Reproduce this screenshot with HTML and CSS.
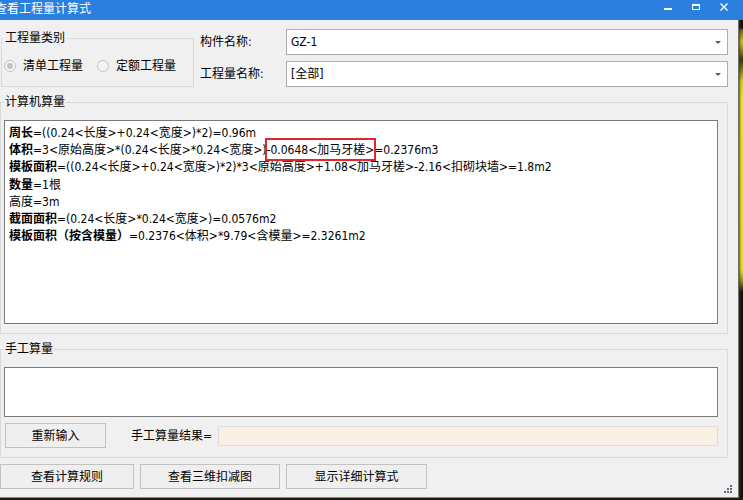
FILE: index.html
```html
<!DOCTYPE html>
<html lang="zh-CN">
<head>
<meta charset="utf-8">
<title>查看工程量计算式</title>
<link rel="stylesheet" href="styles.css">
</head>
<body>
<div class="screen">
  <div class="titlebar">
    <span class="title">查看工程量计算式</span>
    <div class="controls">
      <span class="ctl"><svg width="28" height="20" viewBox="0 0 28 20"><rect x="10" y="8" width="8" height="2" fill="#fff"/></svg></span>
      <span class="ctl"><svg width="28" height="20" viewBox="0 0 28 20"><rect x="10.5" y="4.5" width="7" height="5" fill="none" stroke="#fff" stroke-width="1"/><rect x="10" y="4" width="8" height="2" fill="#fff"/></svg></span>
      <span class="ctl"><svg width="28" height="20" viewBox="0 0 28 20"><path d="M10.5 3.5 L17.5 10.5 M17.5 3.5 L10.5 10.5" stroke="#fff" stroke-width="1.4" fill="none"/></svg></span>
    </div>
  </div>
  <div class="main">
    <div class="window">
      <div class="toprow">
        <fieldset class="group g-type">
          <legend class="legend">工程量类别</legend>
          <div class="radios">
            <span class="radio"><span class="dot checked"></span><span class="rtext">清单工程量</span></span>
            <span class="radio"><span class="dot"></span><span class="rtext">定额工程量</span></span>
          </div>
        </fieldset>
        <div class="form">
          <div class="frow">
            <span class="flabel">构件名称:</span>
            <div class="combo"><span class="cval">GZ-1</span><i class="arrow"></i></div>
          </div>
          <div class="frow">
            <span class="flabel">工程量名称:</span>
            <div class="combo"><span class="cval">[全部]</span><i class="arrow"></i></div>
          </div>
        </div>
      </div>

      <fieldset class="group g-auto">
        <legend class="legend">计算机算量</legend>
        <div class="output">
          <div class="line"><b>周长</b>=((0.24&lt;长度&gt;+0.24&lt;宽度&gt;)*2)=0.96m</div>
          <div class="line"><b>体积</b>=3&lt;原始高度&gt;*(0.24&lt;长度&gt;*0.24&lt;宽度&gt;)<span class="hl">-0.0648&lt;加马牙槎&gt;</span>=0.2376m3</div>
          <div class="line"><b>模板面积</b>=((0.24&lt;长度&gt;+0.24&lt;宽度&gt;)*2)*3&lt;原始高度&gt;+1.08&lt;加马牙槎&gt;-2.16&lt;扣砌块墙&gt;=1.8m2</div>
          <div class="line"><b>数量</b>=1根</div>
          <div class="line">高度=3m</div>
          <div class="line"><b>截面面积</b>=(0.24&lt;长度&gt;*0.24&lt;宽度&gt;)=0.0576m2</div>
          <div class="line"><b>模板面积（按含模量）</b>=0.2376&lt;体积&gt;*9.79&lt;含模量&gt;=2.3261m2</div>
        </div>
      </fieldset>

      <fieldset class="group g-manual">
        <legend class="legend">手工算量</legend>
        <div class="manual-input"></div>
        <div class="mrow">
          <button class="btn btn-reset" type="button">重新输入</button>
          <span class="mlabel">手工算量结果=</span>
          <div class="result"></div>
        </div>
      </fieldset>

      <div class="actions">
        <button class="btn act-1" type="button">查看计算规则</button>
        <button class="btn act-2" type="button">查看三维扣减图</button>
        <button class="btn act-3" type="button">显示详细计算式</button>
      </div>

      <svg class="grip" width="10" height="10" viewBox="0 0 10 10">
        <rect x="6" y="0" width="2" height="2" fill="#5a6a80"/>
        <rect x="3" y="3" width="2" height="2" fill="#5a6a80"/>
        <rect x="6" y="3" width="2" height="2" fill="#5a6a80"/>
        <rect x="0" y="6" width="2" height="2" fill="#5a6a80"/>
        <rect x="3" y="6" width="2" height="2" fill="#5a6a80"/>
        <rect x="6" y="6" width="2" height="2" fill="#5a6a80"/>
      </svg>
    </div>
    <div class="strip"></div>
  </div>
  <div class="bottomedge"></div>
</div>
</body>
</html>
```

FILE: styles.css
```css
html, body {
  margin: 0;
  padding: 0;
}
body {
  background: #000;
  width: 743px;
  height: 500px;
  overflow: hidden;
  font-family: "DejaVu Sans Condensed", "Noto Sans CJK SC", sans-serif;
  font-stretch: condensed;
  font-size: 12px;
  color: #000;
}
.screen {
  width: 743px;
  height: 500px;
  display: flex;
  flex-direction: column;
}
.titlebar {
  height: 20px;
  flex: none;
  background: #2b7fdf;
  display: flex;
  align-items: center;
  color: #fff;
}
.title {
  margin-left: -5px;
  font-size: 12px;
  line-height: 16px;
  padding-bottom: 3px;
}
.controls {
  margin-left: auto;
  margin-right: 5px;
  display: flex;
}
.ctl {
  width: 28px;
  height: 20px;
  display: block;
}
.ctl svg { display: block; }

.main {
  display: flex;
  height: 478px;
  flex: none;
}
.window {
  width: 738px;
  height: 477px;
  background: #f0f0f0;
  border-right: 1px solid #6e6e6e;
  border-bottom: 1px solid #8a8a8a;
  position: relative;
}
.strip {
  width: 4px;
  background:
    linear-gradient(to right, rgba(60,60,0,0.55) 0, rgba(60,60,0,0.55) 1px, transparent 2px),
    linear-gradient(to bottom, #111 0, #111 8px, #6b6b00 10px, #c9c900 22px, #3a3a00 40px, #d6d600 62px, #e8e800 80px, #e2e200 250px, #8a8a00 262px, #111 272px, #111 100%);
}
.bottomedge {
  height: 2px;
  background: #1c1a10;
}

/* group boxes */
.group {
  margin: 0;
  border: 1px solid #dadada;
  min-width: 0;
  box-sizing: border-box;
}
.legend {
  font-size: 12px;
  line-height: 14px;
  padding: 0 2px;
  margin: 0;
}

.toprow {
  display: flex;
}
.g-type {
  margin: 11px 0 0 1px;
  width: 193px;
  padding: 11px 0 10px 1px;
}
.radios {
  display: flex;
  align-items: center;
  height: 20px;
}
.radio {
  display: flex;
  align-items: center;
  line-height: 20px;
}
.radio + .radio {
  margin-left: 14px;
}
.dot {
  width: 12px;
  height: 12px;
  box-sizing: border-box;
  border: 1px solid #c4c4c4;
  border-radius: 50%;
  background: #f4f4f4;
  margin-left: 1px;
  margin-right: 7px;
  display: flex;
  align-items: center;
  justify-content: center;
}
.radio + .radio .dot { margin-left: 0; }
.dot.checked::after {
  content: "";
  width: 6px;
  height: 6px;
  border-radius: 50%;
  background: #c2c2c2;
}

.form {
  margin: 9px 0 0 6px;
  display: flex;
  flex-direction: column;
  gap: 6px;
}
.frow {
  display: flex;
  align-items: center;
}
.flabel {
  width: 86px;
  line-height: 16px;
}
.combo {
  width: 442px;
  height: 26px;
  box-sizing: border-box;
  border: 1px solid #adadad;
  background: #fff;
  display: flex;
  align-items: center;
  padding: 0 6px 0 4px;
}
.cval {
  line-height: 16px;
  flex: 1;
}
.arrow {
  width: 0;
  height: 0;
  border-left: 3px solid transparent;
  border-right: 3px solid transparent;
  border-top: 3px solid #5c5c5c;
  margin-top: 1px;
}

/* computer calc */
.g-auto {
  margin: 8px 0 0 0;
  width: 728px;
  padding: 11px 9px 9px 3px;
}
.g-auto .legend { padding: 0 1px; }
.output {
  width: 714px;
  height: 204px;
  box-sizing: border-box;
  border: 1px solid #7a7a7a;
  background: #fff;
  padding: 4px 4px 3px;
}
.line {
  line-height: 17.2px;
  white-space: nowrap;
}
.line b { font-weight: bold; }
.hl {
  outline: 2px solid #e2262a;
  padding: 3px 0 2px;
}

/* manual calc */
.g-manual {
  margin: 8px 0 0 0;
  width: 728px;
  padding: 11px 9px 9px 3px;
}
.g-manual .legend { padding: 0 1px; }
.manual-input {
  width: 714px;
  height: 50px;
  box-sizing: border-box;
  border: 1px solid #7a7a7a;
  background: #fff;
}
.mrow {
  margin-top: 6px;
  height: 25px;
  display: flex;
  align-items: center;
}
.btn {
  font-family: inherit;
  font-stretch: inherit;
  font-size: 12px;
  color: #000;
  background: #efefef;
  border: 1px solid #c2c2c2;
  box-sizing: border-box;
  height: 25px;
  padding: 0;
  margin: 0;
  line-height: 16px;
}
.btn-reset {
  width: 101px;
  margin-left: 1px;
}
.mlabel {
  margin-left: 25px;
  line-height: 16px;
}
.result {
  flex: 1;
  height: 20px;
  margin-left: 6px;
  box-sizing: border-box;
  border: 1px solid #dedede;
  background: #f9efe5;
}

.actions {
  margin-top: 6px;
  display: flex;
  gap: 6px;
}
.act-1 { width: 134px; }
.act-2 { width: 140px; }
.act-3 { width: 141px; }

.grip {
  position: absolute;
  right: 4px;
  bottom: 2px;
  display: block;
}
```
